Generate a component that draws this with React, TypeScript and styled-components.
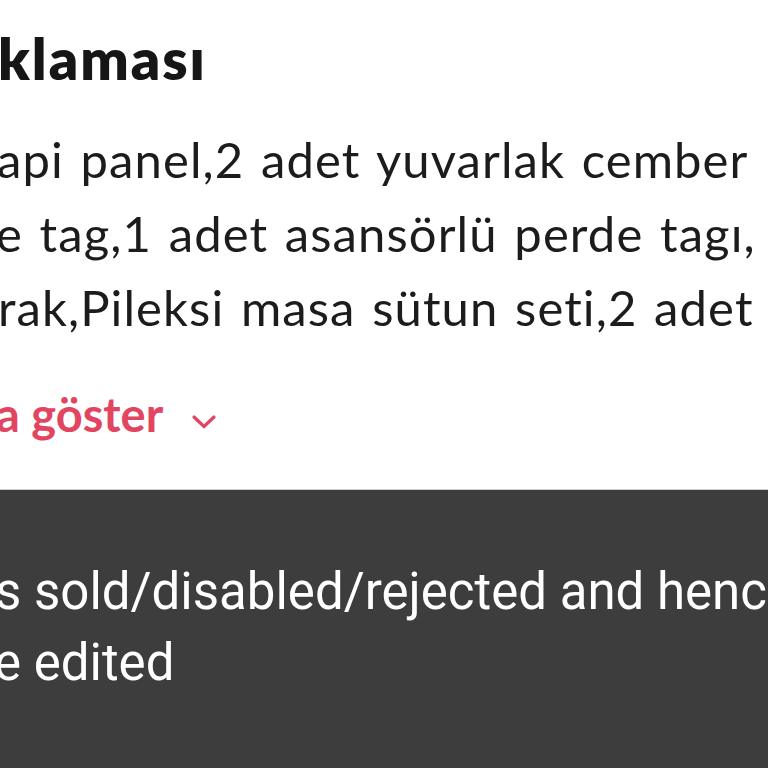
import React from "react";
import styled, { createGlobalStyle } from "styled-components";

const Global = createGlobalStyle`
  html, body { margin: 0; padding: 0; background: #ffffff; }
  #root { width: 768px; height: 768px; }
`;

const Page = styled.div`
  width: 768px;
  height: 768px;
  overflow: hidden;
  display: flex;
  flex-direction: column;
  background: #ffffff;
`;

const Description = styled.section`
  flex: 0 0 489px;
  padding-top: 24px;
  box-sizing: border-box;
  display: flex;
  flex-direction: column;
  font-family: Lato, "Noto Sans", sans-serif;
  color: #1c1c1c;
`;

const Title = styled.h2<{ $indent: number }>`
  margin: 0 0 30px;
  font-size: 57px;
  line-height: 68px;
  font-weight: 800;
  letter-spacing: 2px;
  white-space: nowrap;
  text-indent: ${(p) => p.$indent}px;
  color: #161616;
`;

const Line = styled.p<{ $indent: number }>`
  margin: 0;
  font-size: 49px;
  line-height: 74px;
  font-weight: 400;
  letter-spacing: 1.1px;
  word-spacing: 3px;
  white-space: nowrap;
  text-indent: ${(p) => p.$indent}px;
`;

const ShowMore = styled.button<{ $indent: number }>`
  margin: 33px 0 0;
  padding: 0;
  border: none;
  background: none;
  display: flex;
  align-items: center;
  gap: 28px;
  font-family: Lato, "Noto Sans", sans-serif;
  font-size: 47px;
  line-height: 74px;
  font-weight: 700;
  color: #e2455f;
  white-space: nowrap;
  margin-left: ${(p) => p.$indent}px;
  cursor: pointer;
`;

const Chevron = styled.svg`
  width: 26px;
  height: 16px;
  margin-top: 16px;
`;

const Toast = styled.section`
  flex: 1;
  background: #3d3d3d;
  border-top: 1px solid #cfcfcf;
  padding-top: 66px;
  box-sizing: border-box;
  font-family: Roboto, "Noto Sans", sans-serif;
  color: #ffffff;
`;

const ToastLine = styled.p<{ $indent: number }>`
  margin: 0;
  font-size: 51px;
  line-height: 71px;
  white-space: nowrap;
  text-indent: ${(p) => p.$indent}px;
`;

export default function App() {
  return (
    <Page>
      <Global />
      <Description>
        <Title $indent={-2}>klaması</Title>
        <Line $indent={-3}>api panel,2 adet yuvarlak cember</Line>
        <Line $indent={-4}>e tag,1 adet asansörlü perde tagı,</Line>
        <Line $indent={-2}>rak,Pileksi masa sütun seti,2 adet</Line>
        <ShowMore $indent={-4} type="button">
          a göster
          <Chevron viewBox="0 0 26 16" fill="none">
            <path d="M3 3 L13 12.5 L23 3" stroke="#e2455f" strokeWidth="3.2" strokeLinecap="round" strokeLinejoin="round" />
          </Chevron>
        </ShowMore>
      </Description>
      <Toast>
        <ToastLine $indent={-5}>s sold/disabled/rejected and hence</ToastLine>
        <ToastLine $indent={-6}>e edited</ToastLine>
      </Toast>
    </Page>
  );
}
